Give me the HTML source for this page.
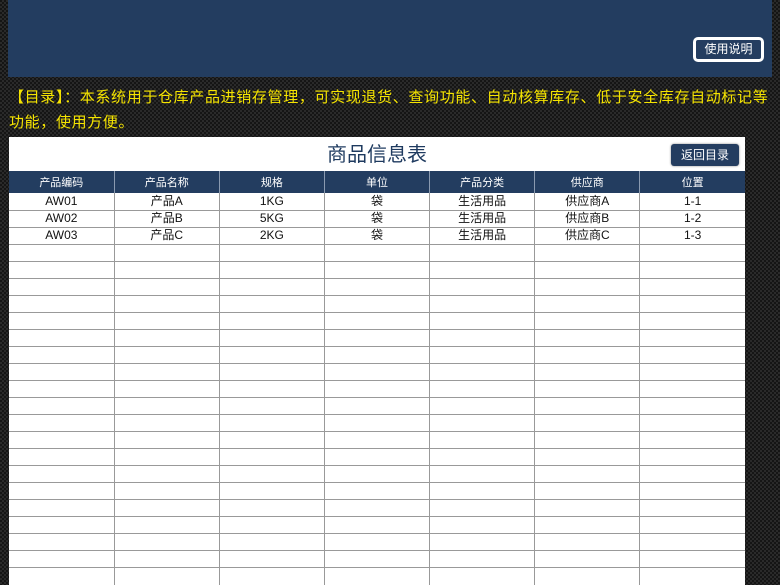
<!DOCTYPE html>
<html><head><meta charset="utf-8"><style>
*{margin:0;padding:0;box-sizing:border-box}
html,body{width:780px;height:585px;overflow:hidden}
body{position:relative;font-family:"Liberation Sans","Noto Sans CJK SC",sans-serif;
background-color:#151515;background-image:linear-gradient(45deg,#2a2a2a 25%,transparent 25%,transparent 75%,#2a2a2a 75%),linear-gradient(45deg,#2a2a2a 25%,transparent 25%,transparent 75%,#2a2a2a 75%);background-size:4px 4px;background-position:0 0,2px 2px}
.banner{position:absolute;left:8px;top:0;width:764px;height:77px;background:#233d60}
.btn1{position:absolute;left:685px;top:37px;width:71px;height:25px;border:3px solid #fff;border-radius:5px;background:#243d60;color:#fff;font-size:12px;text-align:center;line-height:19px}
.txt{position:absolute;left:9px;top:85px;width:770px;overflow:hidden;color:#f5e400;font-size:15px;line-height:25px;letter-spacing:0.65px;white-space:nowrap}
.sheet{position:absolute;left:9px;top:137px;width:736px;height:448px;overflow:hidden;background:#fff}
.vl{position:absolute;top:400px;width:1px;height:60px;background:#999}
.title{position:absolute;left:0;top:0;width:736px;height:34px;background:#fff;text-align:center;font-size:20px;line-height:36px;color:#1e3a5f}
.btn2{position:absolute;left:662px;top:7px;width:68px;height:22px;background:#243d60;border-radius:3px;color:#fff;font-size:12px;text-align:center;line-height:22px;box-shadow:0 0 2px #888}
table{position:absolute;left:0;top:34px;width:736px;border-collapse:collapse;table-layout:fixed}
th{background:#233d60;color:#fff;font-weight:normal;font-size:11px;height:22px;border-right:1px solid #8a9ab0}
td{height:17px;border-bottom:1px solid #999;border-right:1px solid #999;font-size:12px;text-align:center;line-height:15px;color:#111;background:#fff}
td:last-child,th:last-child{border-right:none}
</style></head><body>
<div class="banner"><div class="btn1">使用说明</div></div>
<div class="txt">【目录】：本系统用于仓库产品进销存管理，可实现退货、查询功能、自动核算库存、低于安全库存自动标记等<br>功能，使用方便。</div>
<div class="sheet">
<div class="vl" style="left:105px"></div><div class="vl" style="left:210px"></div><div class="vl" style="left:315px"></div><div class="vl" style="left:420px"></div><div class="vl" style="left:525px"></div><div class="vl" style="left:630px"></div>
<div class="title">商品信息表</div>
<div class="btn2">返回目录</div>
<table>
<tr><th>产品编码</th><th>产品名称</th><th>规格</th><th>单位</th><th>产品分类</th><th>供应商</th><th>位置</th></tr>
<tr><td>AW01</td><td>产品A</td><td>1KG</td><td>袋</td><td>生活用品</td><td>供应商A</td><td>1-1</td></tr>
<tr><td>AW02</td><td>产品B</td><td>5KG</td><td>袋</td><td>生活用品</td><td>供应商B</td><td>1-2</td></tr>
<tr><td>AW03</td><td>产品C</td><td>2KG</td><td>袋</td><td>生活用品</td><td>供应商C</td><td>1-3</td></tr>
<tr><td></td><td></td><td></td><td></td><td></td><td></td><td></td></tr>
<tr><td></td><td></td><td></td><td></td><td></td><td></td><td></td></tr>
<tr><td></td><td></td><td></td><td></td><td></td><td></td><td></td></tr>
<tr><td></td><td></td><td></td><td></td><td></td><td></td><td></td></tr>
<tr><td></td><td></td><td></td><td></td><td></td><td></td><td></td></tr>
<tr><td></td><td></td><td></td><td></td><td></td><td></td><td></td></tr>
<tr><td></td><td></td><td></td><td></td><td></td><td></td><td></td></tr>
<tr><td></td><td></td><td></td><td></td><td></td><td></td><td></td></tr>
<tr><td></td><td></td><td></td><td></td><td></td><td></td><td></td></tr>
<tr><td></td><td></td><td></td><td></td><td></td><td></td><td></td></tr>
<tr><td></td><td></td><td></td><td></td><td></td><td></td><td></td></tr>
<tr><td></td><td></td><td></td><td></td><td></td><td></td><td></td></tr>
<tr><td></td><td></td><td></td><td></td><td></td><td></td><td></td></tr>
<tr><td></td><td></td><td></td><td></td><td></td><td></td><td></td></tr>
<tr><td></td><td></td><td></td><td></td><td></td><td></td><td></td></tr>
<tr><td></td><td></td><td></td><td></td><td></td><td></td><td></td></tr>
<tr><td></td><td></td><td></td><td></td><td></td><td></td><td></td></tr>
<tr><td></td><td></td><td></td><td></td><td></td><td></td><td></td></tr>
<tr><td></td><td></td><td></td><td></td><td></td><td></td><td></td></tr>
</table>
</div>
</body></html>
